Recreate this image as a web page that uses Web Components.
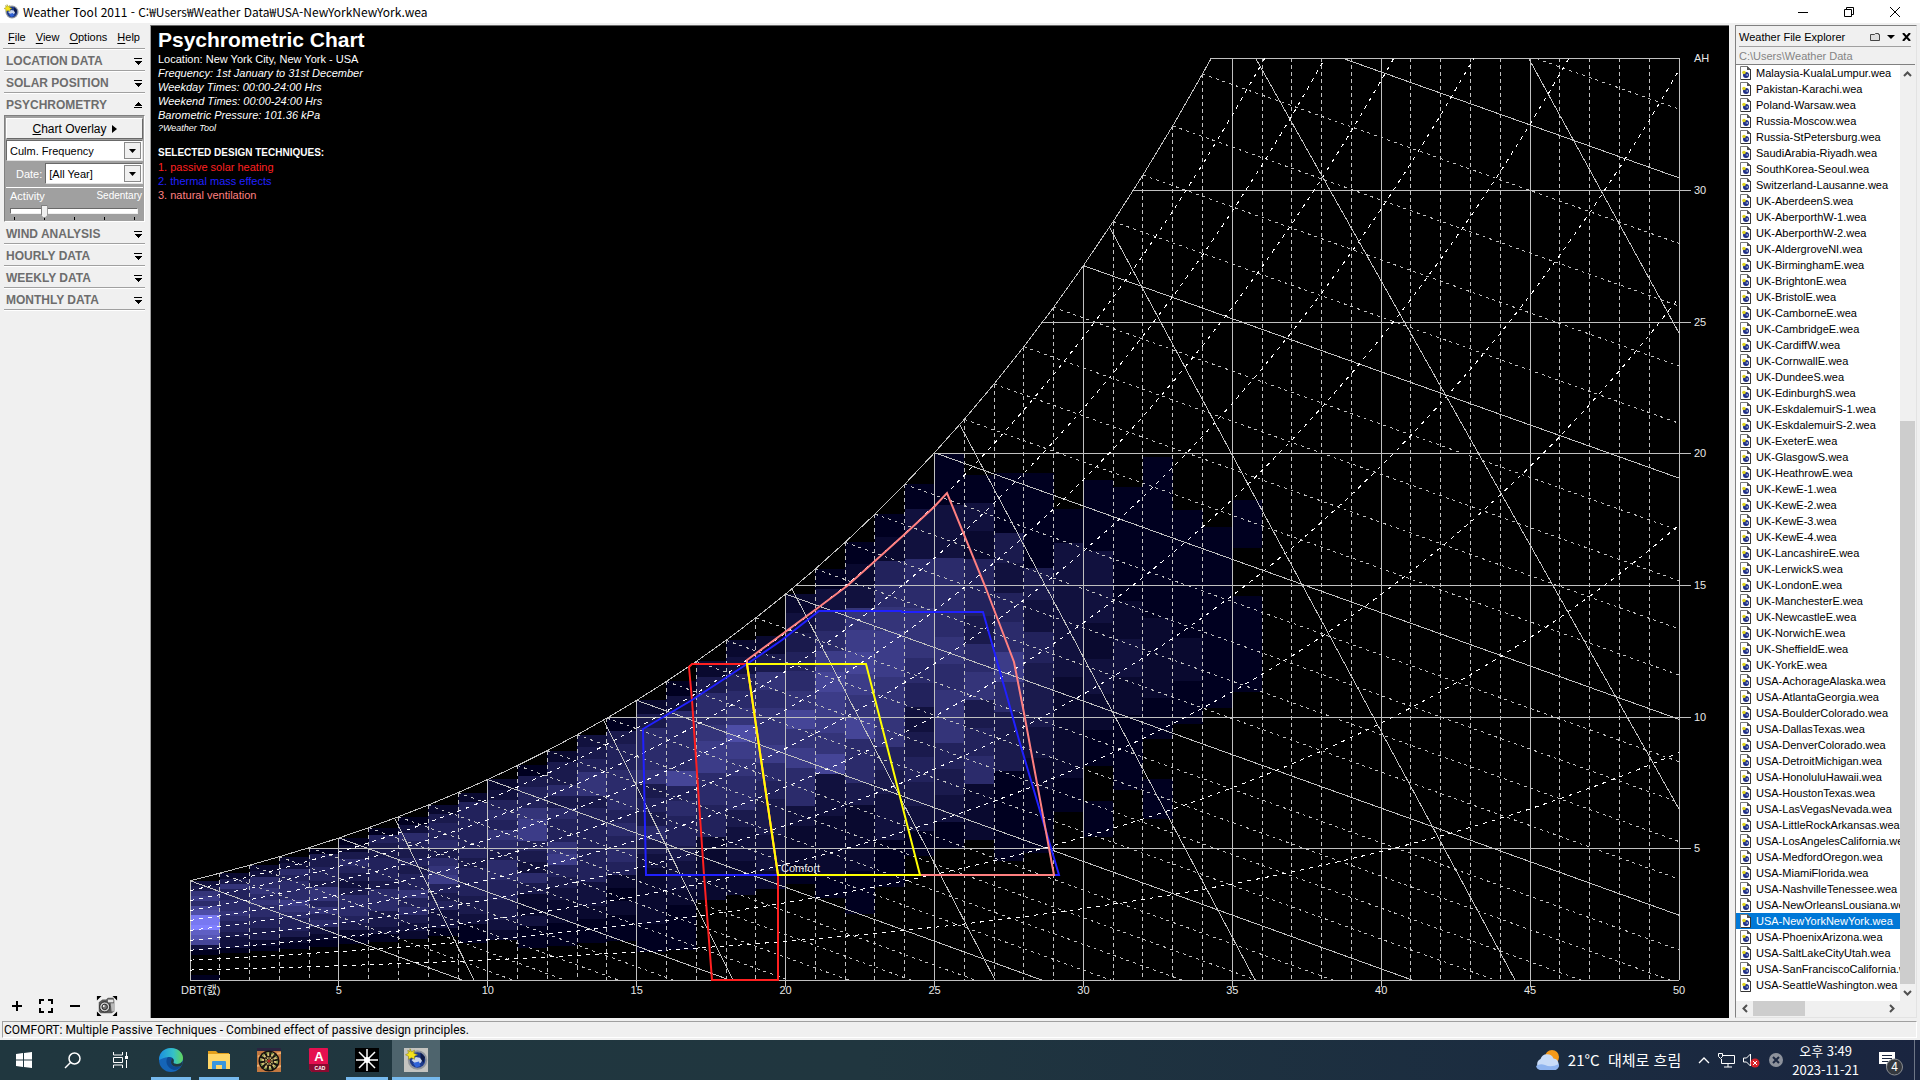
<!DOCTYPE html>
<html lang="ko">
<head>
<meta charset="utf-8">
<title>Weather Tool 2011</title>
<style>
html,body{margin:0;height:100%}
body{font:11px/14px "Liberation Sans","Noto Sans CJK KR",sans-serif;color:#000;background:#f0f0f0;overflow:hidden}
</style>
</head>
<body>
<weather-app></weather-app>
<script>
const globe = `<circle cx="9" cy="8" r="6.500" fill="#8f949c"/><circle cx="9" cy="8" r="5.200" fill="#1d3a8c"/><path d="M5 8l3-2 5 1-2 3-3 1z" fill="#c9d4ea"/><path d="M11 3l3 3-1 4-2-3z" fill="#0d1a48"/><path d="M6 10l4-1 1 3-3 1z" fill="#2f62d8"/><path d="M4 .5l1 2 2-1-.5 2L9 4.500l-2 1 0 2-2-1-2 1 0-2-2-1 2-1L2.500 1.500 4 2.500z" fill="#f4e21c" stroke="#8c8420" stroke-width=".4"/>`;

function define(name, html) {
  customElements.define(name, class extends HTMLElement {
    constructor() {
      super();
      this.attachShadow({mode: 'open'});
    }
    connectedCallback() {
      this.shadowRoot.innerHTML = typeof html === 'function' ? html(this) : html;
    }
  });
}

/* Title bar */
define('title-bar', `<style>
:host{display:flex;align-items:center;background:#fff;height:23px;padding-right:2px;font:12px/20px "Noto Sans CJK KR",sans-serif}
.ico{width:16px;height:16px;margin:0 4px 0 3px}
span{flex:1;white-space:nowrap}
button{border:0;background:none;padding:0;width:46px;height:23px;display:flex;align-items:center;justify-content:center}
button svg{width:12px;height:12px}
</style>
<svg class="ico" viewBox="0 0 16 16">${globe}</svg><span><slot></slot></span>
<button aria-label="Minimize"><svg viewBox="0 0 12 12"><path d="M1 6.500h10" stroke="#000"/></svg></button>
<button aria-label="Restore"><svg viewBox="0 0 12 12"><path d="M1.500 3.500h7v7h-7zM3.500 3V1.500h7v7H9" fill="none" stroke="#000"/></svg></button>
<button aria-label="Close"><svg viewBox="0 0 12 12"><path d="M1 1l10 10M11 1L1 11" stroke="#000"/></svg></button>`);

/* Menu */
define('menu-bar', `<style>
:host{display:flex;gap:10px;padding:5px 0 4px 5px;margin-left:3px;margin-right:5px;border-bottom:1px solid #a0a0a0;box-shadow:0 1px #fff}
button{font:inherit;line-height:14px;border:0;background:none;padding:0;color:#000}
u{text-underline-offset:2px}
</style><button><u>F</u>ile</button><button><u>V</u>iew</button><button><u>O</u>ptions</button><button><u>H</u>elp</button>`);

/* Sidebar section: a header button, and the panel in the slot when open */
define('side-section', el => `<style>
:host{display:block;padding:0 5px 0 4px}
button{display:flex;width:100%;height:22px;align-items:center;justify-content:space-between;border:0;background:none;padding:2px 3px 0 2px;border-bottom:1px solid #a0a0a0;box-shadow:0 1px #fff;font:bold 12px/14px "Liberation Sans",sans-serif;color:#6d6d6d;text-align:left;white-space:nowrap}
:host([open]) button{border-bottom-color:#f0f0f0;box-shadow:none}
svg{width:8px;height:8px}
</style><button aria-expanded="${el.hasAttribute('open')}">${el.getAttribute('label')}<svg viewBox="0 0 8 8" shape-rendering="crispEdges">${el.hasAttribute('open') ? '<path d="M0 6h8v1H0zM0 5l4-4 4 4z"/>' : '<path d="M0 1h8v1H0zM0 4h8L4 8z"/>'}</svg></button><slot></slot>`);

define('drop-down', el => `<style>
:host{display:grid;flex:1;background:#fff;border:1px solid #696969;border-right-color:#e3e3e3;border-bottom-color:#e3e3e3;height:19px;min-width:0}
select,i{grid-area:1/1}
select{appearance:none;border:0;background:none;font:inherit;line-height:14px;padding:0 0 0 3px;margin:0;color:#000;width:100%;min-width:0}
i{justify-self:end;width:15px;height:15px;margin:1px;border:1px solid #8a8a8a;background:#f0f0f0;display:grid;place-items:center;pointer-events:none}
svg{width:7px;height:4px}
</style><select aria-label="${el.getAttribute('label')}"><option>${el.getAttribute('value')}</option></select><i><svg viewBox="0 0 7 4"><path d="M0 0h7L3.500 4z"/></svg></i>`);

define('psychro-panel', `<style>
:host{display:flex;flex-direction:column;box-sizing:border-box;height:107px;overflow:hidden;background:#a0a0a0;border:1px solid #808080;border-right-color:#fff;border-bottom-color:#fff;padding:2px 1px 0;gap:1px}
.overlay{font:inherit;font-size:12px;line-height:14px;flex:none;height:21px;background:#f0f0f0;border:1px solid #fff;border-right-color:#696969;border-bottom-color:#696969;padding:0;display:flex;align-items:center;justify-content:center;gap:5px;color:#000}
.overlay svg{width:5px;height:8px}
drop-down{flex:none}
.date{display:flex;align-items:center;gap:3px;padding:1px 0 3px 10px;color:#fff;border-bottom:1px solid #fff}
.date drop-down{flex:1;color:#000}
.act{display:flex;justify-content:space-between;align-items:center;color:#fff;padding:1px 1px 0 4px;font-size:11px;line-height:12px}
.act span{font-size:10px}
input{appearance:none;width:128px;height:16px;margin:0 4px;background:none;flex:none;display:block}
input::-webkit-slider-runnable-track{height:6px;background:#fff;border:1px solid #696969;border-right-color:#f0f0f0;border-bottom-color:#f0f0f0}
input::-webkit-slider-thumb{appearance:none;width:7px;height:13px;margin-top:-4px;background:#f0f0f0;border:1px solid #808080;clip-path:polygon(0 0,100% 0,100% 75%,50% 100%,0 75%)}
.ticks{display:flex;justify-content:space-between;padding:0 8px;margin-top:-3px}
.ticks i{width:1px;height:3px;background:#000}
</style>
<button class="overlay"><span><u>C</u>hart Overlay</span><svg viewBox="0 0 5 8"><path d="M0 0l5 4-5 4z"/></svg></button>
<drop-down label="Display" value="Culm. Frequency"></drop-down>
<div class="date"><span>Date:</span><drop-down label="Date" value="[All Year]"></drop-down></div>
<div class="act"><label for="a">Activity</label><span>Sedentary</span></div>
<input id="a" type="range" min="0" max="4" value="1">
<div class="ticks"><i></i><i></i><i></i><i></i><i></i></div>`);

define('zoom-tools', `<style>
:host{display:flex;align-items:center;gap:15px;padding:0 0 0 11px;height:24px}
button{border:0;background:none;padding:0;display:flex}
svg{display:block}
</style>
<button aria-label="Zoom in"><svg width="12" height="12" viewBox="0 0 12 12"><path d="M1 6h10M6 1v10" stroke="#000" stroke-width="2"/></svg></button>
<button aria-label="Fit"><svg width="16" height="16" viewBox="0 0 16 16"><path d="M2 6V2h4M10 2h4v4M14 10v4h-4M6 14H2v-4" fill="none" stroke="#000" stroke-width="2"/></svg></button>
<button aria-label="Zoom out"><svg width="12" height="12" viewBox="0 0 12 12"><path d="M1 6h10" stroke="#000" stroke-width="2"/></svg></button>
<button aria-label="Snapshot"><svg width="22" height="24" viewBox="0 0 24 24"><path d="M1 1h5L1 6zM23 1h-5l5 5zM1 23h5l-5-5zM23 23h-5l5-5z"/><path d="M3 8l4-3h4l2-2h6l1 3v12l-3 2H5l-2-2z" fill="#5c5c5c"/><path d="M13 5h6v3h-6z" fill="#e4e4e4"/><path d="M16 9h4v9h-3z" fill="#b9b9b9"/><circle cx="9.500" cy="13" r="5.500" fill="#ccc" stroke="#222"/><circle cx="9.500" cy="13" r="3" fill="#777" stroke="#222"/><circle cx="8.500" cy="12" r="1" fill="#fff"/></svg></button>`);

/* Chart */
const X = t => 39 + t * 29.78, Y = w => 954 - w * 26.33;
const pws = t => 0.61094 * Math.exp(17.625 * t / (t + 243.04));
const hum = t => { const p = pws(t); return 622 * p / (101.36 - p); };
/* Hours in each cell, one row for each degree; 20 steps of 5% RH from the top down, 0-f, "." is empty */
const cells = `2367589eefba820....0 136445565443220 125565655443310 125455576544310 033443664645210
013543235554310 043344435553320 025434344645321 134453567434220 1444444344433200 1245465355443321
03446774325311200 13353544674321100 23466344444422100 03445554545410100 135556343532111100
025555845443221000 135567755441111 124569765532211 .13656675433221 123456867552110
0245787768221110 01267876855311100 0145677666432200 022556654234320 002255565664320
..0214435634511 ...0032457533000 ....000324332100 ......022221110 ......00221210.0
.......00121200 .......0000110.0 .........00010 ..........0000 ..........0.00000000`.split(/\s+/);
cells[35] = '..........'.slice(5) + '';

/* Columns 31 to 35 lie in dry air and are short: first step, then the levels */
[[31, 7, '00012100'], [32, 7, '0000110.0'], [33, 9, '00010'], [34, 10, '0000'], [35, 10, '0.00']]
  .forEach(([t, n, v]) => cells[t] = '.'.repeat(n) + v);

function chartMarkup() {
  let s = '';
  cells.forEach((col, t) => {
    const h = hum(t) / 20;
    [...col].forEach((c, i) => {
      if (c === '.') return;
      const v = parseInt(c, 16), y = Math.round(Y(h * (20 - i))), y2 = Math.round(Y(h * (19 - i)));
      const r = Math.round(v * 8.6), b = Math.min(255, Math.round(32 + v * 14.9));
      s += `<rect x="${Math.round(X(t))}" y="${y}" width="${Math.round(X(t + 1)) - Math.round(X(t))}" height="${y2 - y}" fill="rgb(${r},${r},${b})"/>`;
    });
  });
  const line = (x1, y1, x2, y2, c) => `<line x1="${x1}" y1="${y1}" x2="${x2}" y2="${y2}" class="${c}"/>`;
  const tOf = (w, rh = 1) => { let a = 0, b = 60; for (let i = 0; i < 40; i++) { const m = (a + b) / 2; rh * hum(m) < w ? a = m : b = m; } return a; };
  for (let t = 0; t <= 50; t++) {
    const x = Math.floor(X(t)) + .5, top = Y(Math.min(35, hum(t)));
    s += line(x, top, x, t % 5 ? 954 : (t && t < 50 ? 961 : 954), t % 5 ? 'g d' : 'g');
  }
  for (let w = 0; w <= 35; w += 5) {
    const y = Math.round(Y(w)) + .5;
    s += line(w ? X(tOf(w)) : X(0), y, w && w < 35 ? 1540 : 1528, y, 'g');
  }
  const top = tOf(35);
  let p = '';
  for (let t = 0; t < top; t++) p += `${X(t)},${Y(hum(t))} `;
  s += `<polyline class="g" points="${p}${X(top)},${Y(35)}"/>`;
  for (let t = 0; t < 40; t++) {
    const m = .4125 - .0003 * t, w = hum(t);
    const a = w > 35 ? t + (w - 35) / m : t;
    if (a >= 50) continue;
    const b = Math.min(50, t + w / m);
    s += line(X(a), Y(Math.min(35, w)), X(b), Y(w - (b - t) * m), t % 5 ? 'g e' : 'g');
  }
  for (let rh = 1; rh < 10; rh++) {
    const end = Math.min(50, tOf(35, rh / 10));
    let q = '';
    for (let t = 0; t < end; t++) q += `${X(t)},${Y(hum(t) * rh / 10)} `;
    s += `<polyline class="w" points="${q}${X(end)},${Y(hum(end) * rh / 10)}"/>`;
  }
  [[244,793,323,954],[453,695,582,954],[641,563,844,954],[809,399,1104,954],[959,202,1364,954],[1105,33,1528,783],[1378,33,1528,307]]
    .forEach(l => s += line(...l, 'g'));
  const poly = (c, pts) => `<polygon points="${pts}" stroke="${c}"/>`;
  s += '<g class="zone">' +
    poly('#ff2020', '538,641 541,638 596,638 627,849 627,954 561,954 553,849 541,674') +
    poly('#2020ff', '492,703 541,674 596,638 631,614 668,585 750,585 751,586 832,586 857,674 868,714 908,849 495,849') +
    poly('#ff8080', '596,634 668,581 696,560 724,535 755,507 783,481 796,467 834,560 863,636 873,687 903,849 627,849 596,638') +
    poly('#ffff00', '627,849 596,638 715,638 769,849') + '</g>';
  for (let t = 5; t <= 50; t += 5) s += `<text x="${X(t)}" y="968" text-anchor="middle">${t}</text>`;
  for (let w = 5; w <= 30; w += 5) s += `<text x="1543" y="${Y(w) + 4}">${w}</text>`;
  return s + '<text x="1543" y="36">AH</text><text x="30" y="968">DBT(캜)</text><text x="630" y="846">Comfort</text>';
}

define('psychro-chart', () => `<style>
:host{display:block;position:relative;background:#000;border-left:1px solid #a0a0a0;border-top:1px solid #696969;color:#fff;min-width:0;overflow:hidden}
svg{position:absolute;inset:0;width:100%;height:100%}
line,polyline,rect{shape-rendering:crispEdges}
line,polyline,polygon{fill:none}
.g{stroke:#c0c0c0}.d{stroke-dasharray:4 3}.e{stroke-dasharray:3 4}
.w{stroke:#fff;stroke-dasharray:4 5}
.zone{stroke-width:2}
text{fill:#e8e8e8;font:11px "Liberation Sans","Noto Sans CJK KR",sans-serif}
header{position:absolute;left:7px;top:2px;font-style:italic;white-space:nowrap;line-height:14px}
h1{font:bold 21px/24px "Liberation Sans",sans-serif;margin:0}
p{margin:0}
.n{font-style:normal}.s{font-size:9px;line-height:12px;margin-bottom:12px}
.b{font-weight:bold;font-size:10px}
</style>
<svg viewBox="0 0 1578 992" role="img" aria-label="Psychrometric chart">${chartMarkup()}</svg>
<header><h1>Psychrometric Chart</h1>
<p class="n">Location: New York City, New York - USA</p>
<p>Frequency: 1st January to 31st December</p><p>Weekday Times: 00:00-24:00 Hrs</p><p>Weekend Times: 00:00-24:00 Hrs</p><p>Barometric Pressure: 101.36 kPa</p><p class="s">?Weather Tool</p>
<p class="n b">SELECTED DESIGN TECHNIQUES:</p>
<p class="n" style="color:#ff2020">1. passive solar heating</p><p class="n" style="color:#2020ff">2. thermal mass effects</p><p class="n" style="color:#ff8080">3. natural ventilation</p></header>`);

/* Explorer */
define('file-item', `<style>
:host{display:flex;align-items:center;height:16px;gap:5px;padding-left:4px;white-space:nowrap}
:host([selected]){background:#0078d7;color:#fff}
svg{width:11px;height:14px;flex:none}
</style><svg viewBox="0 0 11 14"><path d="M.5.500h7l3 3v10H.5z" fill="#fff" stroke="#777"/><path d="M7 0v4h4z" fill="#555"/><path d="M10.500 3v10.500H1" fill="none" stroke="#333"/><circle cx="6" cy="9" r="3" fill="#1f2e86"/><path d="M5 9l3-1v2z" fill="#9fb0d8"/><circle cx="4" cy="6.500" r="1.800" fill="#e0d420"/></svg><span><slot></slot></span>`);

const files = `Malaysia-KualaLumpur Pakistan-Karachi Poland-Warsaw Russia-Moscow Russia-StPetersburg SaudiArabia-Riyadh SouthKorea-Seoul Switzerland-Lausanne UK-AberdeenS UK-AberporthW-1 UK-AberporthW-2 UK-AldergroveNI UK-BirminghamE UK-BrightonE UK-BristolE UK-CamborneE UK-CambridgeE UK-CardiffW UK-CornwallE UK-DundeeS UK-EdinburghS UK-EskdalemuirS-1 UK-EskdalemuirS-2 UK-ExeterE UK-GlasgowS UK-HeathrowE UK-KewE-1 UK-KewE-2 UK-KewE-3 UK-KewE-4 UK-LancashireE UK-LerwickS UK-LondonE UK-ManchesterE UK-NewcastleE UK-NorwichE UK-SheffieldE UK-YorkE USA-AchorageAlaska USA-AtlantaGeorgia USA-BoulderColorado USA-DallasTexas USA-DenverColorado USA-DetroitMichigan USA-HonoluluHawaii USA-HoustonTexas USA-LasVegasNevada USA-LittleRockArkansas USA-LosAngelesCalifornia USA-MedfordOregon USA-MiamiFlorida USA-NashvilleTenessee USA-NewOrleansLousiana USA-NewYorkNewYork USA-PhoenixArizona USA-SaltLakeCityUtah USA-SanFranciscoCalifornia USA-SeattleWashington`.split(' ');

define('file-explorer', () => `<style>
:host{display:flex;flex-direction:column;border:1px solid #808080;border-right-color:#e3e3e3;border-bottom-color:#e3e3e3;box-sizing:border-box;padding-right:1px}
.head{display:flex;align-items:center;gap:7px;height:19px;padding-top:1px;margin:0 4px 0 3px;border-bottom:1px solid #a0a0a0}
.head span{flex:1;white-space:nowrap}
button{border:0;background:none;padding:0;display:flex;align-items:center;justify-content:center}
input{font:inherit;border:0;background:none;height:18px;padding:0 3px;margin:0;color:#848484;border-bottom:1px solid #808080;box-sizing:border-box}
.body{flex:1;display:grid;grid-template-columns:1fr 15px;grid-template-rows:1fr 15px;min-height:0;padding-bottom:1px}
.list{background:#fff;overflow:hidden;min-width:0}
.v{display:flex;flex-direction:column;align-items:center}
.v button,.h button{width:15px;height:17px}
.v i{width:100%;background:#cdcdcd;flex:561}
.v b{flex:338}
.h{display:flex;align-items:center}.h i{height:100%;background:#cdcdcd;flex:53}.h b{flex:79}
.h button{width:17px;height:15px}
</style>
<div class="head"><span>Weather File Explorer</span>
<button aria-label="Folder"><svg width="10" height="8" viewBox="0 0 10 8"><path d="M.5 7.500v-6h4l1-1h3v1h1v6z" fill="#ddd" stroke="#444"/></svg></button>
<button aria-label="Options"><svg width="8" height="4" viewBox="0 0 8 4"><path d="M0 0h8L4 4z"/></svg></button>
<button aria-label="Close panel"><svg width="9" height="8" viewBox="0 0 9 8"><path d="M1 0l7 8M8 0L1 8" stroke="#000" stroke-width="2"/></svg></button></div>
<input aria-label="Path" value="C:\\Users\\Weather Data">
<div class="body"><div class="list">${files.map(f => `<file-item${f === 'USA-NewYorkNewYork' ? ' selected' : ''}>${f}.wea</file-item>`).join('')}</div>
<div class="v"><button aria-label="Up"><svg width="9" height="6" viewBox="0 0 9 6"><path d="M1 5l3.500-3.500L8 5" fill="none" stroke="#505050" stroke-width="2"/></svg></button><b></b><i></i><button aria-label="Down"><svg width="9" height="6" viewBox="0 0 9 6"><path d="M1 1l3.500 3.500L8 1" fill="none" stroke="#505050" stroke-width="2"/></svg></button></div>
<div class="h"><button aria-label="Left"><svg width="6" height="9" viewBox="0 0 6 9"><path d="M5 1L1.500 4.500 5 8" fill="none" stroke="#505050" stroke-width="2"/></svg></button><i></i><b></b><button aria-label="Right"><svg width="6" height="9" viewBox="0 0 6 9"><path d="M1 1l3.500 3.500L1 8" fill="none" stroke="#505050" stroke-width="2"/></svg></button></div></div>`);

define('status-bar', `<style>
:host{display:block;box-sizing:border-box;height:17px;margin:0 3px 2px 2px;border:1px solid #a0a0a0;border-right-color:#fff;border-bottom-color:#fff;padding-left:1px;font:12px/16px Roboto,"Noto Sans CJK KR",sans-serif;white-space:nowrap}
</style><slot></slot>`);

/* Taskbar */
define('task-button', el => `<style>
:host{display:block;width:${el.getAttribute('w') || 48}px;height:40px}
button{width:100%;height:40px;border:0;background:none;padding:0;display:grid;place-items:center;position:relative}
:host([active]) button{background:#4e646d}
:host([running]) button::after{content:"";position:absolute;left:4px;right:4px;bottom:0;height:3px;background:#76b9ed}
:host([active]) button::after{left:0;right:0}
</style><button aria-label="${el.getAttribute('label')}"><slot></slot></button>`);

define('task-bar', `<style>
:host{display:flex;height:40px;background:linear-gradient(90deg,#20373f,#20363f 45%,#1b2c40 80%,#1a2540);color:#fff;font:15px/20px "Noto Sans CJK KR","Noto Sans",sans-serif}
svg{display:block}
.sp{flex:1}
.weather{display:flex;align-items:center;gap:7px;white-space:nowrap;margin-right:17px}
.tray{display:flex;align-items:center;gap:8px}
button{border:0;background:none;color:inherit;padding:0;font:inherit}
.clock{font-size:13px;line-height:19px;text-align:center;margin:0 20px 0 8px}
.note{position:relative;width:24px}
.note svg{position:absolute;left:0;top:11px}
.end{width:5px;margin-left:11px;border-left:1px solid #6d7686}
</style>
<task-button label="Start"><svg width="16" height="16" viewBox="0 0 16 16"><path fill="#fff" d="M0 2l7-1v6.500H0zM8 1l8-1v7.500H8zM0 8.500h7V15l-7-1zM8 8.500h8V16l-8-1z"/></svg></task-button>
<task-button label="Search"><svg width="17" height="17" viewBox="0 0 17 17"><circle cx="10.500" cy="6.500" r="5.500" fill="none" stroke="#fff" stroke-width="1.500"/><path d="M6.500 10.500L1 16" stroke="#fff" stroke-width="1.500"/></svg></task-button>
<task-button label="Task view"><svg width="16" height="16" viewBox="0 0 16 16"><path d="M1.500 0v3h9V0M1.500 16v-3h9v3M1.500 5.500h9v5h-9zM14.500 0v4M14.500 8v8" fill="none" stroke="#fff"/><path d="M13 4h3v3h-3z" fill="#fff"/></svg></task-button>
<task-button label="Edge" running style="padding-left:3px"><svg width="24" height="24" viewBox="0 0 24 24"><defs><linearGradient id="e1" x1="0" x2="1"><stop offset="0" stop-color="#1b8fe0"/><stop offset=".6" stop-color="#35c1c8"/><stop offset="1" stop-color="#62d65a"/></linearGradient></defs><circle cx="12" cy="12" r="12" fill="#1565b8"/><path d="M0 12C0 4 6 0 12 0s12 4 12 10c0 4-3 6-6 6-3 0-4-1-3.500-2 1-2 0-5-4.500-5-5 0-9 3-10 3z" fill="url(#e1)"/><path d="M9 9c-3 3-2 11 6 13 3 0 6-2 7-4-4 2-10 1-10-4 0-2 1-3 1-4-1-1-2-1-4-1z" fill="#0d4a94"/><path d="M14.500 14c-.5 1 1 2 3.500 2s4-.6 5.500-3c0 2-.5 4-1.500 5-5 2-10 0-10-4 0-2 1-3 1-4 2 1 2 3 1.500 4z" fill="#203840"/></svg></task-button>
<task-button label="Files" running><svg width="22" height="20" viewBox="0 0 22 20"><path d="M0 1h8l2 2h11v16H0z" fill="#e3a01c"/><path d="M0 4h22v15H0z" fill="#ffd667"/><path d="M4 19v-7q0-1 1-1h12q1 0 1 1v7h-4v-4H8v4z" fill="#3a96dd"/></svg></task-button>
<task-button label="Darts" w="51"><svg width="24" height="24" viewBox="0 0 24 24"><path d="M0 0h24v24H0z" fill="#c27840"/><path d="M0 0h24v3H0z" fill="#2a2440"/><path d="M1 8l5 2M0 18l6-2M18 6l6-1M18 20l6-2" stroke="#f0b070" stroke-width="2"/><circle cx="12" cy="13" r="10.500" fill="#17120f"/><circle cx="12" cy="13" r="7" fill="none" stroke="#d8c078" stroke-width="4" stroke-dasharray="2.200 2.200"/><circle cx="12" cy="13" r="8.200" fill="none" stroke="#4b7a30" stroke-dasharray="3 2"/><circle cx="12" cy="13" r="4" fill="#b8a860"/><path d="M12 8v10M7 13h10M8.500 9.500l7 7M15.500 9.500l-7 7" stroke="#2c2018"/><circle cx="12" cy="13" r="1.500" fill="#b02020"/></svg></task-button>
<task-button label="AutoCAD"><svg width="21" height="24" viewBox="0 0 21 24"><path d="M0 2l4-2h15q1 0 1 1v4h-4z" fill="#b01038"/><path d="M1 1q0-1 1-1h17q1 0 1 1v22q0 1-1 1H4l-3-3z" fill="#e51050"/><path d="M1 16h20v8H4l-3-3z" fill="#8a0a30"/><text x="11" y="13" text-anchor="middle" fill="#fff" font-family="Liberation Sans" font-weight="700" font-size="13">A</text><text x="12" y="22" text-anchor="middle" fill="#fff" font-family="Liberation Sans" font-weight="700" font-size="5">CAD</text></svg></task-button>
<task-button label="Star" running w="50"><svg width="24" height="24" viewBox="0 0 24 24"><path d="M0 0h24v24H0z"/><path d="M12 1v22M1 12h22M4 4l16 16M20 4L4 20" stroke="#fff" stroke-width="1.500"/><circle cx="12" cy="12" r="3" fill="#fff"/></svg></task-button>
<task-button label="Weather Tool" running active><svg width="24" height="24" viewBox="0 0 16 16"><path d="M0 0h16v16H0z" fill="#c4c4c0"/>${globe}</svg></task-button>
<div class="sp"></div>
<button class="weather"><svg width="26" height="22" viewBox="0 0 26 22"><circle cx="17" cy="8" r="7" fill="#f59a1b"/><path d="M6 21a6 6 0 0 1-.5-11 7 7 0 0 1 13-.5A6 6 0 0 1 20 21z" fill="#c9dcf8"/><path d="M1 17q4-3 9-1 6 3 14-1a5 5 0 0 1-4 6H6q-4 0-5-4z" fill="#8fb4ef"/></svg><span>21°C&nbsp; 대체로 흐림</span></button>
<div class="tray">
<button aria-label="Hidden icons"><svg width="12" height="8" viewBox="0 0 12 8"><path d="M1 7l5-5 5 5" fill="none" stroke="#fff" stroke-width="1.300"/></svg></button>
<button aria-label="Network"><svg width="17" height="15" viewBox="0 0 17 15"><path d="M5 2.500h11.500v8H3.500V6M10 11v3M6 14h8M.5.500h4v3l-2 2-2-2z" fill="none" stroke="#fff"/></svg></button>
<button aria-label="Muted"><svg width="17" height="15" viewBox="0 0 17 15"><path d="M.5 5h3l4-4v12l-4-4h-3z" fill="none" stroke="#fff"/><circle cx="12" cy="10" r="4.500" fill="#d8232a"/><path d="M10 8l4 4M14 8l-4 4" stroke="#fff"/></svg></button>
<button aria-label="Blocked"><svg width="16" height="16" viewBox="0 0 16 16"><circle cx="8" cy="8" r="7" fill="#8d929c"/><path d="M5 5l6 6M11 5l-6 6" stroke="#1b2740" stroke-width="2"/></svg></button></div>
<button class="clock">오후 3:49<br>2023-11-21</button>
<button class="note" aria-label="Notifications"><svg width="24" height="26" viewBox="0 0 24 26"><path d="M0 1h16v12h-6l-3 4v-4H0z" fill="#fff"/><path d="M3 4.500h10M3 7.500h10M3 10.500h6" stroke="#1b2740"/><circle cx="15.500" cy="16" r="8" fill="#34383e" stroke="#8a8d92"/><text x="15.500" y="20" text-anchor="middle" fill="#fff" font-size="12">4</text></svg></button>
<div class="end"></div>`);

define('weather-app', `<style>
:host{display:flex;flex-direction:column;height:100vh}
main{flex:1;display:flex;min-height:0;padding:2px 3px 3px 0}
aside{width:150px;flex:none;display:flex;flex-direction:column}
.sp{flex:1}
psychro-chart{flex:1}
file-explorer{width:182px;flex:none;margin-left:6px}
</style>
<title-bar>Weather Tool 2011 - C:₩Users₩Weather Data₩USA-NewYorkNewYork.wea</title-bar>
<main><aside><menu-bar></menu-bar>
<side-section label="LOCATION DATA"></side-section><side-section label="SOLAR POSITION"></side-section>
<side-section label="PSYCHROMETRY" open><psychro-panel></psychro-panel></side-section>
<side-section label="WIND ANALYSIS"></side-section><side-section label="HOURLY DATA"></side-section><side-section label="WEEKLY DATA"></side-section><side-section label="MONTHLY DATA"></side-section>
<div class="sp"></div><zoom-tools></zoom-tools></aside>
<psychro-chart></psychro-chart><file-explorer></file-explorer></main>
<status-bar>COMFORT: Multiple Passive Techniques - Combined effect of passive design principles.</status-bar>
<task-bar></task-bar>`);
</script>
</body>
</html>
